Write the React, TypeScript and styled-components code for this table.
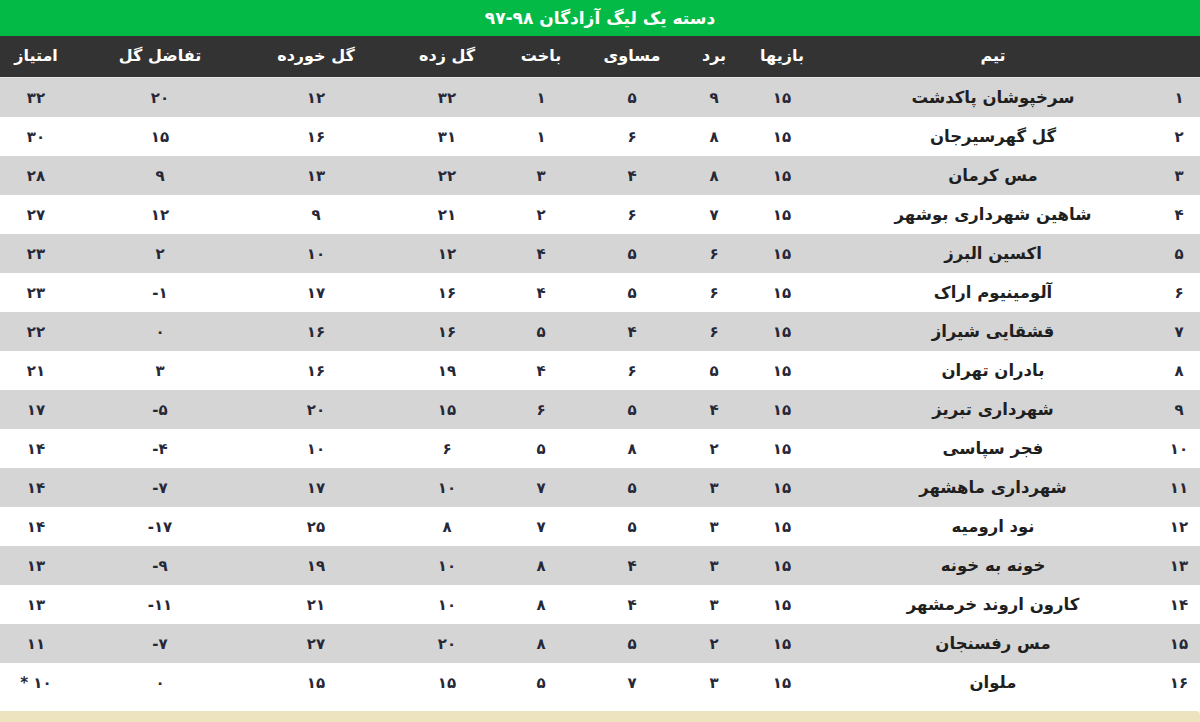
import React from 'react';
import styled, { createGlobalStyle } from 'styled-components';

const GlobalStyle = createGlobalStyle`
  html, body {
    margin: 0;
    padding: 0;
    background: #ffffff;
  }
  body {
    font-family: "DejaVu Sans", "Noto Sans", sans-serif;
  }
`;

const toFa = (v: number | string) =>
  String(v).replace(/[0-9]/g, (d) => '۰۱۲۳۴۵۶۷۸۹'[Number(d)]);

const columns = ['', 'تیم', 'بازیها', 'برد', 'مساوی', 'باخت', 'گل زده', 'گل خورده', 'تفاضل گل', 'امتیاز'];

// team, played, won, drawn, lost, gf, ga, gd, pts
const standings: [string, number, number, number, number, number, number, number, string][] = [
  ['سرخپوشان پاکدشت', 15, 9, 5, 1, 32, 12, 20, '32'],
  ['گل گهرسیرجان', 15, 8, 6, 1, 31, 16, 15, '30'],
  ['مس کرمان', 15, 8, 4, 3, 22, 13, 9, '28'],
  ['شاهین شهرداری بوشهر', 15, 7, 6, 2, 21, 9, 12, '27'],
  ['اکسین البرز', 15, 6, 5, 4, 12, 10, 2, '23'],
  ['آلومینیوم اراک', 15, 6, 5, 4, 16, 17, -1, '23'],
  ['قشقایی شیراز', 15, 6, 4, 5, 16, 16, 0, '22'],
  ['بادران تهران', 15, 5, 6, 4, 19, 16, 3, '21'],
  ['شهرداری تبریز', 15, 4, 5, 6, 15, 20, -5, '17'],
  ['فجر سپاسی', 15, 2, 8, 5, 6, 10, -4, '14'],
  ['شهرداری ماهشهر', 15, 3, 5, 7, 10, 17, -7, '14'],
  ['نود ارومیه', 15, 3, 5, 7, 8, 25, -17, '14'],
  ['خونه به خونه', 15, 3, 4, 8, 10, 19, -9, '13'],
  ['کارون اروند خرمشهر', 15, 3, 4, 8, 10, 21, -11, '13'],
  ['مس رفسنجان', 15, 2, 5, 8, 20, 27, -7, '11'],
  ['ملوان', 15, 3, 7, 5, 15, 15, 0, '* 10'],
];

export default function App() {
  return (
    <>
      <GlobalStyle />
      <Page>
        <Title>دسته یک لیگ آزادگان ۹۸-۹۷</Title>
        <HeaderRow>
          {columns.map((c, i) => (
            <HeadCell key={i}>{c}</HeadCell>
          ))}
        </HeaderRow>
        {standings.map((row, index) => (
          <Row key={index} $striped={index % 2 === 0}>
            <Cell>{toFa(index + 1)}</Cell>
            <TeamCell>{row[0]}</TeamCell>
            {row.slice(1).map((v, i) => (
              <Cell key={i}>{toFa(v)}</Cell>
            ))}
          </Row>
        ))}
        <Footer />
      </Page>
    </>
  );
}

const Page = styled.div`
  width: 1200px;
  height: 722px;
  display: flex;
  flex-direction: column;
  background: #ffffff;
  overflow: hidden;
`;

const Title = styled.div`
  height: 36px;
  background: #04ba46;
  color: #ffffff;
  direction: rtl;
  display: flex;
  align-items: center;
  justify-content: center;
  font-size: 17px;
  font-weight: 700;
  letter-spacing: -0.3px;
`;

const grid = `
  display: grid;
  direction: rtl;
  grid-template-columns: 42px 330px 92px 44px 120px 62px 126px 136px 176px 72px;
`;

const HeaderRow = styled.div`
  ${grid}
  height: 41px;
  background: #333333;
  border-bottom: 1px solid #e4e4e4;
`;

const HeadCell = styled.div`
  display: flex;
  align-items: center;
  justify-content: center;
  color: #ffffff;
  font-size: 16px;
  font-weight: 700;
  padding-bottom: 2px;
`;

const Row = styled.div<{ $striped: boolean }>`
  ${grid}
  height: 39px;
  background: ${(p) => (p.$striped ? '#d5d5d5' : '#ffffff')};
`;

const Cell = styled.div`
  display: flex;
  align-items: center;
  justify-content: center;
  direction: ltr;
  color: #262838;
  font-size: 15px;
  font-weight: 700;
`;

const TeamCell = styled.div`
  display: flex;
  align-items: center;
  justify-content: center;
  color: #1f1f1f;
  font-size: 16.5px;
  font-weight: 700;
  letter-spacing: 0.2px;
`;

const Footer = styled.div`
  margin-top: 9px;
  flex: 1;
  background: #ede3bf;
  border-top-right-radius: 4px;
`;
